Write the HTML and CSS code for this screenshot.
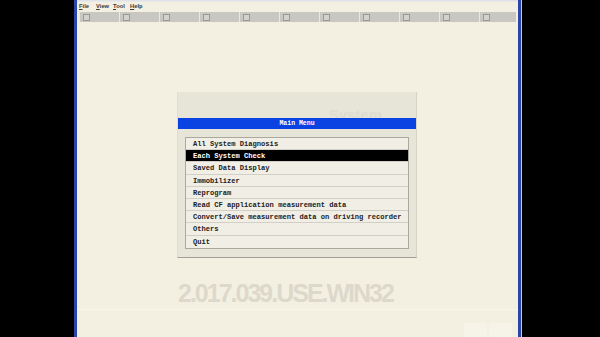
FILE: index.html
```html
<!DOCTYPE html>
<html lang="en">
<head>
    <meta charset="UTF-8">
    <meta name="viewport" content="width=device-width, initial-scale=1.0">
    <title>Main Menu</title>
    <link rel="stylesheet" href="styles.css">
</head>
<body>
    <div class="screen">
        <div class="side-bar"></div>

        <div class="window">
            <!-- Menu bar -->
            <div class="menubar">
                <span><u>F</u>ile</span>
                <span><u>V</u>iew</span>
                <span><u>T</u>ool</span>
                <span><u>H</u>elp</span>
            </div>

            <!-- Toolbar -->
            <div class="toolbar">
                <div class="tool"><span class="tool-icon"></span></div>
                <div class="tool"><span class="tool-icon"></span></div>
                <div class="tool"><span class="tool-icon"></span></div>
                <div class="tool"><span class="tool-icon"></span></div>
                <div class="tool"><span class="tool-icon"></span></div>
                <div class="tool"><span class="tool-icon"></span></div>
                <div class="tool"><span class="tool-icon"></span></div>
                <div class="tool"><span class="tool-icon"></span></div>
                <div class="tool"><span class="tool-icon"></span></div>
                <div class="tool"><span class="tool-icon"></span></div>
                <div class="tool"><span class="tool-icon"></span></div>
            </div>

            <div class="workspace">
                <div class="dialog">
                    <div class="watermark">System</div>
                    <div class="dialog-title">Main Menu</div>
                    <ul class="menu-list">
                        <li>All System Diagnosis</li>
                        <li class="selected">Each System Check</li>
                        <li>Saved Data Display</li>
                        <li>Immobilizer</li>
                        <li>Reprogram</li>
                        <li>Read CF application measurement data</li>
                        <li>Convert/Save measurement data on driving recorder</li>
                        <li>Others</li>
                        <li>Quit</li>
                    </ul>
                </div>

                <div class="version">2.017.039.USE.WIN32</div>

                <div class="statusbar">
                    <span class="status-pane"></span>
                    <span class="status-pane"></span>
                </div>
            </div>
        </div>

        <div class="side-bar right"></div>
    </div>
</body>
</html>
```

FILE: styles.css
```css
body {
    margin: 0;
    background-color: #000;
    font-family: "Liberation Sans", Arial, sans-serif;
}

.screen {
    display: flex;
    height: 337px;
    overflow: hidden;
}

.side-bar {
    width: 74px;
    flex-shrink: 0;
    background-color: #000;
}

.side-bar.right {
    flex: 1;
    border-left: 1px solid #c9cedd;
}

.window {
    width: 447px;
    flex-shrink: 0;
    box-sizing: border-box;
    border-left: 3px solid #2a45a6;
    border-right: 3px solid #2a45a6;
    background-color: #f4f0e1;
    display: flex;
    flex-direction: column;
}

/* Menu bar */
.menubar {
    height: 11px;
    display: flex;
    align-items: center;
    padding-left: 2px;
    background: linear-gradient(#dfe2e8 0, #dfe2e8 1px, #f3f0e3 2px);
    font-size: 5.8px;
    font-weight: bold;
    color: #3a3a3a;
}

.menubar span {
    width: 17px;
}

.menubar u {
    text-decoration-thickness: 0.5px;
}

/* Toolbar */
.toolbar {
    display: flex;
    height: 10px;
    margin-top: 1px;
    padding-left: 2px;
}

.tool {
    width: 40px;
    flex-shrink: 0;
    box-sizing: border-box;
    background-color: #c8c7c2;
    border-left: 1px solid #ebe9df;
    display: flex;
    align-items: center;
    padding-left: 3px;
}

.tool:last-child {
    width: 37px;
}

.tool-icon {
    width: 5px;
    height: 5px;
    border: 1px solid #9a9994;
    background-color: #d2d1cc;
}

/* Work area */
.workspace {
    flex: 1;
    display: flex;
    flex-direction: column;
    background-color: #f4f0e1;
}

.dialog {
    position: relative;
    width: 240px;
    box-sizing: border-box;
    margin: 70px 0 0 100px;
    padding: 26px 0 8px;
    background-color: #e7e4d8;
    border-left: 1px solid #e0ddd0;
    border-right: 1px solid #d6d3c7;
    border-bottom: 1px solid #a3a197;
}

.watermark {
    position: absolute;
    top: 14px;
    right: 34px;
    font-size: 15px;
    font-weight: bold;
    color: #dfdcd1;
}

.dialog-title {
    position: relative;
    height: 11px;
    line-height: 11px;
    background-color: #0b42e2;
    color: #fff;
    text-align: center;
    font-family: "Liberation Mono", "Courier New", monospace;
    font-size: 6.5px;
    font-weight: bold;
}

.menu-list {
    position: relative;
    list-style: none;
    margin: 8px 7px 0;
    padding: 0;
    border: 1px solid #aaa89e;
    background-color: #f0eee5;
}

.menu-list li {
    height: 12.2px;
    line-height: 12.2px;
    box-sizing: border-box;
    padding-left: 7px;
    border-bottom: 1px solid #d2d0c6;
    font-family: "Liberation Mono", "Courier New", monospace;
    font-size: 7.1px;
    font-weight: bold;
    color: #222;
    white-space: nowrap;
}

.menu-list li:last-child {
    border-bottom: none;
}

.menu-list li.selected {
    background-color: #000;
    color: #fff;
}

.version {
    margin: 23px 0 0 101px;
    font-size: 25px;
    line-height: 25px;
    font-weight: bold;
    letter-spacing: -2px;
    color: #dcd9cc;
}

.statusbar {
    margin-top: auto;
    height: 27px;
    border-top: 1px solid #f7f5ec;
    display: flex;
    justify-content: flex-end;
    align-items: flex-end;
    gap: 2px;
    padding-right: 6px;
}

.status-pane {
    width: 23px;
    height: 14px;
    background-color: #f6f3e8;
}
```
